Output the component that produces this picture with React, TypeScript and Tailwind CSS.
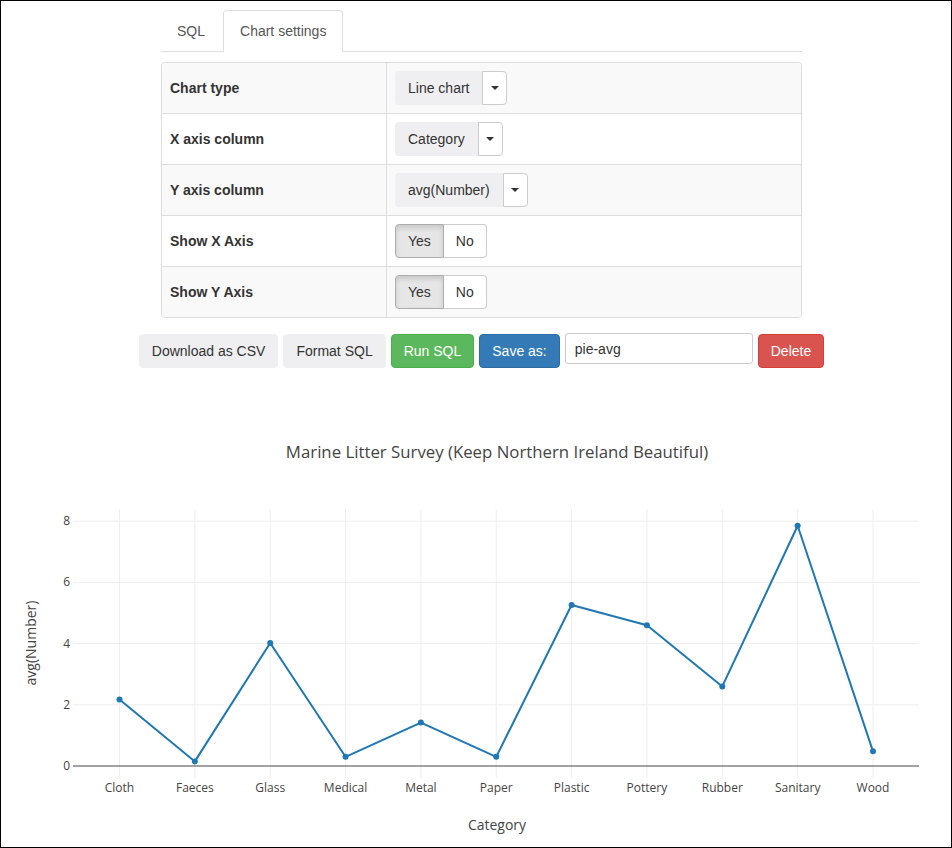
import { FC } from "react";

type Point = { name: string; value: number };

const data: Point[] = [
  { name: "Cloth", value: 2.17 },
  { name: "Faeces", value: 0.15 },
  { name: "Glass", value: 4.02 },
  { name: "Medical", value: 0.3 },
  { name: "Metal", value: 1.42 },
  { name: "Paper", value: 0.3 },
  { name: "Plastic", value: 5.26 },
  { name: "Pottery", value: 4.6 },
  { name: "Rubber", value: 2.6 },
  { name: "Sanitary", value: 7.85 },
  { name: "Wood", value: 0.48 },
];

const settings = [
  { label: "Chart type", kind: "select", value: "Line chart" },
  { label: "X axis column", kind: "select", value: "Category" },
  { label: "Y axis column", kind: "select", value: "avg(Number)" },
  { label: "Show X Axis", kind: "toggle", value: "" },
  { label: "Show Y Axis", kind: "toggle", value: "" },
];

const Select: FC<{ value: string }> = ({ value }) => (
  <div className="flex h-[34px]">
    <div className="flex items-center px-[13px] bg-[#efeff1] rounded-l-[4px] text-[#333]">
      {value}
    </div>
    <div className="flex items-center justify-center w-[25px] bg-white border border-[#ccc] rounded-r-[4px]">
      <span className="block w-0 h-0 border-l-[4px] border-r-[4px] border-t-[4px] border-l-transparent border-r-transparent border-t-[#333]" />
    </div>
  </div>
);

const Toggle: FC = () => (
  <div className="flex h-[34px]">
    <div className="flex items-center px-[12px] bg-[#e6e6e6] border border-[#adadad] rounded-l-[4px] shadow-[inset_0_3px_5px_rgba(0,0,0,0.125)] text-[#333]">
      Yes
    </div>
    <div className="flex items-center px-[12px] bg-white border border-l-0 border-[#ccc] rounded-r-[4px] text-[#333]">
      No
    </div>
  </div>
);

const Chart: FC = () => {
  const left = 73;
  const right = 919;
  const zeroY = 765;
  const unit = 30.6;
  const xs = data.map((_, i) => 119.5 + i * 75.35);
  const ys = data.map((d) => zeroY - d.value * unit);
  const path = xs.map((x, i) => `${i === 0 ? "M" : "L"}${x},${ys[i]}`).join(" ");

  return (
    <svg width="950" height="480" viewBox="1 367 950 480" className="block">
      <text
        x="497"
        y="457"
        textAnchor="middle"
        fontFamily="'Open Sans', sans-serif"
        fontSize="16.8"
        fill="#444"
      >
        Marine Litter Survey (Keep Northern Ireland Beautiful)
      </text>

      {xs.map((x, i) => (
        <line key={"v" + i} x1={x} x2={x} y1="508" y2="777" stroke="#eee" strokeWidth="1" />
      ))}
      {[2, 4, 6, 8].map((v) => (
        <line
          key={"h" + v}
          x1={left}
          x2={right}
          y1={zeroY - v * unit}
          y2={zeroY - v * unit}
          stroke="#eee"
          strokeWidth="1"
        />
      ))}
      <line x1={left} x2={right} y1={zeroY} y2={zeroY} stroke="#444" strokeWidth="1" />

      {[0, 2, 4, 6, 8].map((v) => (
        <text
          key={"yl" + v}
          x="70"
          y={zeroY - v * unit + 4}
          textAnchor="end"
          fontFamily="'Open Sans', sans-serif"
          fontSize="12"
          fill="#444"
        >
          {v}
        </text>
      ))}
      {data.map((d, i) => (
        <text
          key={"xl" + i}
          x={xs[i]}
          y="791"
          textAnchor="middle"
          fontFamily="'Open Sans', sans-serif"
          fontSize="12"
          fill="#444"
        >
          {d.name}
        </text>
      ))}

      <path d={path} fill="none" stroke="#1f77b4" strokeWidth="2" strokeLinejoin="round" />
      {xs.map((x, i) => (
        <circle key={"p" + i} cx={x} cy={ys[i]} r="3" fill="#1f77b4" />
      ))}

      <text
        x="497"
        y="829"
        textAnchor="middle"
        fontFamily="'Open Sans', sans-serif"
        fontSize="14"
        fill="#444"
      >
        Category
      </text>
      <text
        x="36"
        y="642"
        textAnchor="middle"
        transform="rotate(-90 36 642)"
        fontFamily="'Open Sans', sans-serif"
        fontSize="14"
        fill="#444"
      >
        avg(Number)
      </text>
    </svg>
  );
};

const App: FC = () => {
  return (
    <div className="w-[952px] h-[848px] border border-black bg-white font-['Liberation_Sans',Arial,sans-serif] text-[14px] leading-[20px] text-[#333] overflow-hidden">
      <div className="w-[641px] ml-[160px] pt-[9px]">
        <div className="flex border-b border-[#ddd]">
          <div className="px-[15px] py-[10px] mr-[2px] border border-transparent text-[#555] -mb-px">SQL</div>
          <div className="px-[16px] py-[10px] border border-[#ddd] border-b-white rounded-t-[4px] bg-white text-[#555] -mb-px">
            Chart settings
          </div>
        </div>

        <div className="mt-[10px] border border-[#ddd] rounded-[4px] overflow-hidden">
          {settings.map((s, i) => (
            <div
              key={s.label}
              className={
                "flex " +
                (i > 0 ? "h-[51px] border-t border-[#ddd] " : "h-[50px] ") +
                (i % 2 === 0 ? "bg-[#f9f9f9]" : "bg-white")
              }
            >
              <div className="w-[225px] border-r border-[#ddd] px-[8px] flex items-center font-bold">
                {s.label}
              </div>
              <div className="flex-1 px-[8px] flex items-center">
                {s.kind === "select" ? <Select value={s.value} /> : <Toggle />}
              </div>
            </div>
          ))}
        </div>

        <div className="flex justify-center items-start gap-[5px] mt-[16px]">
          <button className="shrink-0 h-[34px] px-[12px] rounded-[4px] bg-[#efeff1] border border-[#efeff1] text-[#333]">
            Download as CSV
          </button>
          <button className="shrink-0 h-[34px] px-[12px] rounded-[4px] bg-[#efeff1] border border-[#efeff1] text-[#333]">
            Format SQL
          </button>
          <button className="shrink-0 h-[34px] px-[12px] rounded-[4px] bg-[#5cb85c] border border-[#4cae4c] text-white">
            Run SQL
          </button>
          <button className="shrink-0 h-[34px] px-[12px] rounded-[4px] bg-[#337ab7] border border-[#2e6da4] text-white">
            Save as:
          </button>
          <input
            className="shrink-0 w-[188px] h-[31px] -mt-px px-[9px] rounded-[3px] border border-[#ccc] bg-white text-[#333] outline-none"
            defaultValue="pie-avg"
          />
          <button className="shrink-0 h-[34px] px-[12px] rounded-[4px] bg-[#d9534f] border border-[#d43f3a] text-white">
            Delete
          </button>
        </div>
      </div>

      <Chart />
    </div>
  );
};

export default App;
